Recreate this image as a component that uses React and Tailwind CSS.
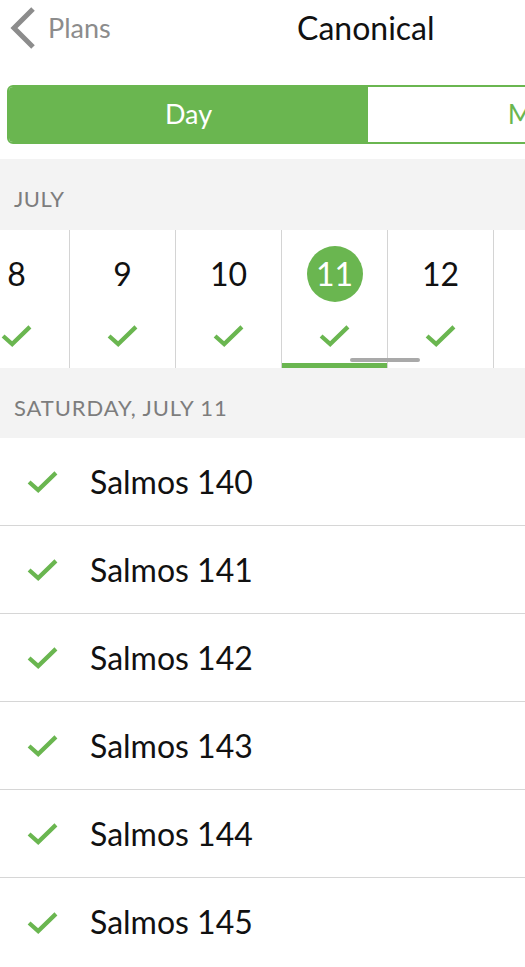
import { useState } from 'react';

const Check = ({ className = '' }) => (
  <svg viewBox="0 0 32 24" className={className} fill="none">
    <path d="M2 12.5 L11.5 21 L30 3" stroke="currentColor" strokeWidth="4.4" strokeLinecap="butt" strokeLinejoin="miter" />
  </svg>
);

const days = [8, 9, 10, 11, 12];
const readings = [140, 141, 142, 143, 144, 145];

const App = () => {
  const [selected, setSelected] = useState(11);

  return (
    <div className="w-[525px] h-[967px] overflow-hidden bg-white" style={{ fontFamily: 'Lato, "Noto Sans", sans-serif' }}>
      {/* nav bar */}
      <div className="relative h-[85px] flex items-start">
        <button className="flex items-center pl-[10px] pt-[7px] text-[#8c8c8c]">
          <svg viewBox="0 0 26 42" className="w-[26px] h-[42px]" fill="none">
            <path d="M23 2 L4 21 L23 40" stroke="currentColor" strokeWidth="5" />
          </svg>
          <span className="ml-[12px] text-[27px] leading-none -mt-[2px]">Plans</span>
        </button>
        <h1 className="absolute left-[297px] top-[12px] text-[32px] leading-none text-[#111]">Canonical</h1>
      </div>

      {/* segmented control */}
      <div className="flex w-[722px] h-[59px] ml-[7px] rounded-[6px] border-2 border-[#6ab650] overflow-hidden">
        <div className="flex-1 bg-[#6ab650] flex items-center justify-center text-white text-[27px]">Day</div>
        <div className="flex-1 bg-white flex items-center justify-center text-[#6ab650] text-[27px]">Month</div>
      </div>

      {/* month header */}
      <div className="mt-[15px] h-[71px] bg-[#f3f3f3] flex items-end pb-[20px] pl-[14px]">
        <span className="text-[22px] leading-none tracking-[0.5px] text-[#7d7d7d]">JULY</span>
      </div>

      {/* days strip */}
      <div className="relative h-[138px] flex -ml-[36px]">
        {days.map((d) => {
          const active = d === selected;
          return (
            <button
              key={d}
              onClick={() => setSelected(d)}
              className="relative w-[106px] shrink-0 h-full border-r border-[#d4d4d4] flex flex-col items-center"
            >
              <div className={`mt-[16px] w-[56px] h-[56px] rounded-full flex items-center justify-center text-[32px] leading-none ${active ? 'bg-[#6ab650] text-white' : 'text-[#111]'}`}>
                {d}
              </div>
              <Check className="mt-[22px] w-[31px] h-[23px] text-[#6ab650]" />
              {active && <div className="absolute left-0 right-0 bottom-0 h-[5px] bg-[#6ab650]" />}
            </button>
          );
        })}
        <div className="absolute left-[386px] top-[128px] w-[70px] h-[4px] rounded-full bg-[#a9a9a9]" />
      </div>

      {/* day header */}
      <div className="h-[70px] bg-[#f3f3f3] flex items-end pb-[19px] pl-[14px]">
        <span className="text-[22px] leading-none tracking-[0.9px] text-[#7d7d7d]">SATURDAY, JULY 11</span>
      </div>

      {/* readings */}
      <div>
        {readings.map((n, i) => (
          <div key={n} className={`h-[88px] flex items-center ${i < readings.length - 1 ? 'border-b border-[#d6d6d6]' : ''}`}>
            <Check className="ml-[27px] w-[31px] h-[23px] text-[#6ab650]" />
            <span className="ml-[32px] text-[32px] leading-none text-[#111]">Salmos {n}</span>
          </div>
        ))}
      </div>
    </div>
  );
};

export default App;
